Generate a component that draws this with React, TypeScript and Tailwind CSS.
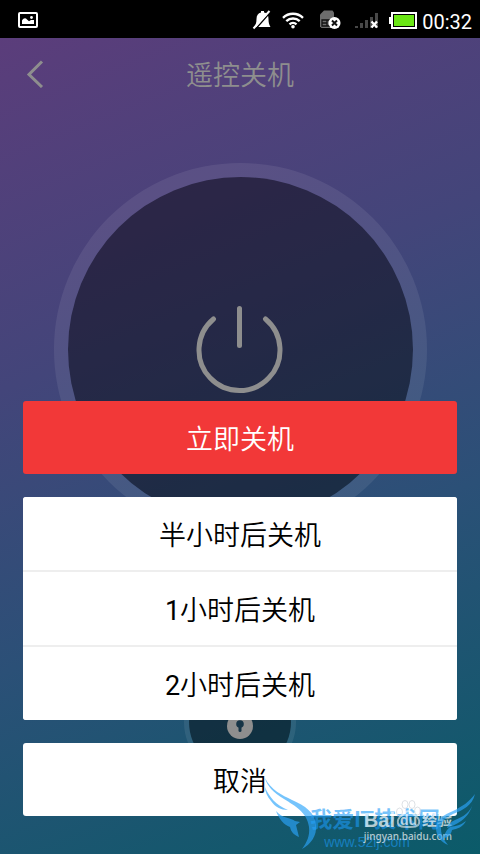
import React from "react";

const BellOff = () => (
  <svg width="20" height="20" viewBox="0 0 20 20" aria-hidden="true">
    <path d="M9 1h3v1.500c3.500.8 4.500 3 4.500 6.500 0 4 .6 5.500 2 8H2c1.800-2.500 2.500-4 2.500-8 0-3.500 1.500-5.700 4.500-6.500z" fill="#fff" />
    <path d="M19 1.500 4 18.500" stroke="#000" strokeWidth="1.500" />
    <path d="M17.500 1 1.500 18.500" stroke="#fff" strokeWidth="2" />
  </svg>
);

const Wifi = () => (
  <svg width="22" height="17" viewBox="0 0 22 17" fill="none" stroke="#fff" strokeWidth="2.400" aria-hidden="true">
    <path d="M1 5.800a14.500 14.500 0 0 1 20 0M4.300 9.200a9.800 9.800 0 0 1 13.400 0M7.500 12.300a5.300 5.300 0 0 1 7 0" />
    <circle cx="11" cy="14.800" r="1.800" fill="#fff" stroke="none" />
  </svg>
);

const Sim = () => (
  <svg width="22" height="20" viewBox="0 0 22 20" aria-hidden="true">
    <path d="M5 .5h8.500l1.500 2V18H2.500L1 16.500V4.500z" fill="#6c6c6c" />
    <path d="M3 10h5v6H3zM3 13h5M8 10h3M8 16h3" fill="none" stroke="#111" strokeWidth="1.300" />
    <circle cx="15.500" cy="13" r="6" fill="#fff" />
    <path d="m13 10.500 5 5m0-5-5 5" stroke="#111" strokeWidth="2" />
  </svg>
);

const Signal = () => (
  <svg width="24" height="17" viewBox="0 0 24 17" aria-hidden="true">
    <path d="M0 14h3v2H0zM5 11h3v5H5zM10 8h3v8h-3zM15 5h3v11h-3zM20 1h3v15h-3z" fill="#484848" />
    <path d="m16.500 9.500 5.500 6m0-6-5.500 6" stroke="#fff" strokeWidth="2.300" />
  </svg>
);

const Battery = () => (
  <svg width="28" height="17" viewBox="0 0 28 17" aria-hidden="true">
    <path d="M0 5h3v7H0z" fill="#fff" />
    <rect x="3" y="1" width="24" height="15" fill="#000" stroke="#fff" strokeWidth="2" />
    <rect x="5" y="3" width="20" height="11" fill="#6ae614" />
  </svg>
);

const StatusBar = () => (
  <div className="flex h-[38px] items-center bg-black pt-0.5 pr-2 pl-[18px] text-white">
    <svg width="20" height="16" viewBox="0 0 20 16" aria-hidden="true">
      <rect x="1" y="1" width="18" height="14" rx="1" fill="none" stroke="#fff" strokeWidth="2" />
      <path d="M4 12V8.500C5.500 6 7.500 5.500 9 7.500l2 1.800L13 8h3v4z" fill="#fff" />
      <circle cx="13.500" cy="5.500" r="1.400" fill="#fff" />
    </svg>
    <div className="ml-auto flex items-center">
      <BellOff />
      <span className="ml-[10px]"><Wifi /></span>
      <span className="ml-[15px]"><Sim /></span>
      <span className="ml-[14px]"><Signal /></span>
      <span className="ml-[10px]"><Battery /></span>
      <time className="ml-[5px] pt-1 font-[Roboto] text-xl leading-6">00:32</time>
    </div>
  </div>
);

const Watermarks = () => (
  <div className="pointer-events-none absolute right-0 bottom-0 h-[84px] w-[220px]">
    <div className="absolute right-10 bottom-1 flex flex-col items-center text-[#1b9af7]/60">
      <span className="text-[22px] leading-7 font-bold whitespace-nowrap">我爱IT技术网</span>
      <span className="mr-4 font-['Liberation_Sans'] text-sm leading-4">www.52ij.com</span>
    </div>
    <div className="absolute right-7 bottom-3 flex flex-col items-end text-white/70">
      <div className="flex items-end font-bold">
        <span className="font-['Liberation_Sans'] text-xl leading-5">Bai</span>
        <div className="relative h-8 w-[27px]">
          <svg width="27" height="32" viewBox="0 0 27 32" fill="none" stroke="#d5dade" strokeOpacity=".8" aria-hidden="true">
            <ellipse cx="4.500" cy="14" rx="3" ry="4" />
            <ellipse cx="10" cy="6.500" rx="3" ry="4" />
            <ellipse cx="17" cy="6.500" rx="3" ry="4" />
            <ellipse cx="22.500" cy="13" rx="3" ry="4" />
            <path d="M13.500 13c3 0 4 2.500 6.500 4.500 3 2 5 4.500 4 8-1 4-6 3.500-10.500 3.500S4 29.500 3 25.500c-1-3.500 1-6 4-8 2.500-2 3.500-4.500 6.500-4.500z" stroke="currentColor" strokeWidth="2" />
          </svg>
          <span className="absolute inset-x-0 bottom-0.5 text-center font-['Liberation_Sans'] text-sm leading-4">du</span>
        </div>
        <span className="text-[15px] leading-5">经验</span>
      </div>
      <span className="font-['Noto_Sans'] text-[10px] leading-3 font-medium">jingyan.baidu.com</span>
    </div>
    <svg className="absolute inset-0" width="220" height="84" viewBox="0 0 220 84" fill="#2ba4fa" fillOpacity=".65" aria-hidden="true">
      <path d="M5 8c6 12 17 17 27 22 13 6 23 12 24 25 1 11-5 19-14 24 5-7 8-13 7-22C47 42 35 36 24 29 13 22 7 16 5 8z" />
      <path d="M5 17c4 10 11 18 23 23-7 0-13-3-17-9-4-5-6-9-6-14z" />
      <path d="M16 41c7 8 14 6 19 10l5 1-4 3 3 12c-5-2-8-5-9-10-6-2-11-8-14-16z" />
      <path d="M215 24c-3 12-12 16-22 20-8 4-13 8-12 15 0 6 3 11 7 16-7-3-12-9-12-17 0-9 8-13 17-17 10-5 16-9 22-17z" />
      <path d="M213 33c-2 9-10 14-18 17-4 2-7 4-8 8 8-3 22-8 26-25z" />
      <path d="M206 51c-3 6-9 8-14 9-1 5-4 8-9 8 2-4 3-8 7-11 6-1 11-2 16-6z" />
    </svg>
  </div>
);

const delays = [
  { amount: "半", unit: "小时后关机" },
  { amount: "1", unit: "小时后关机" },
  { amount: "2", unit: "小时后关机" },
];

export default function App() {
  return (
    <div className="flex min-h-screen flex-col font-['Roboto','Noto_Sans_CJK_SC',sans-serif]">
      <StatusBar />
      <main className="relative flex flex-1 flex-col bg-[linear-gradient(158deg,#5b3d7b_0%,#43457a_35%,#2b5077_63%,#0b5b69_100%)]">
        <header className="grid h-[72px] grid-cols-[72px_1fr_72px] items-center text-[#8e8e8e]">
          <button aria-label="返回" className="flex h-full items-center pl-[26px]">
            <svg width="18" height="28" viewBox="0 0 18 28" fill="none" stroke="currentColor" strokeWidth="3" aria-hidden="true">
              <path d="M16 1.500 3 14.500 16 27" />
            </svg>
          </button>
          <h1 className="pt-1 text-center text-[27px] leading-8 font-[350]">遥控关机</h1>
        </header>

        <div className="flex flex-col items-center pt-[53px]">
          <button aria-label="关机" className="flex size-[373px] items-center justify-center rounded-full border-[14px] border-white/8 bg-black/42 bg-clip-padding text-[#8e8e8e]">
            <svg width="88" height="88" viewBox="0 0 88 88" fill="none" stroke="currentColor" strokeWidth="5" strokeLinecap="round" aria-hidden="true">
              <path d="M17.500 13a40.500 40.500 0 1 0 52 0M43.500 2.500v37" />
            </svg>
          </button>
          <button aria-label="锁定" className="mt-[130px] flex size-[112px] items-center justify-center rounded-full border-[5px] border-white/8 bg-black/42 bg-clip-padding">
            <svg className="mt-2" width="28" height="28" viewBox="0 0 28 28" aria-hidden="true">
              <circle cx="14" cy="14" r="13" fill="#8e8e8e" />
              <circle cx="14" cy="12" r="3.800" fill="#163446" />
              <path d="M14 13v5.500" stroke="#163446" strokeWidth="3" strokeLinecap="round" />
            </svg>
          </button>
        </div>

        <div role="dialog" aria-label="遥控关机" className="absolute inset-x-0 bottom-0 flex flex-col gap-[23px] px-[23px] pb-[38px] text-[27px] font-[350]">
          <button className="h-[73px] rounded-[3px] bg-[#f23838] pt-1.5 text-white">立即关机</button>
          <div className="flex flex-col gap-0.5 overflow-hidden rounded-[3px] bg-[#eee]">
            {delays.map(({ amount, unit }) => (
              <button key={amount} className="h-[73px] bg-white pt-1.5 text-black">
                {amount === "半" ? amount : <span className="font-normal">{amount}</span>}
                {unit}
              </button>
            ))}
          </div>
          <button className="h-[73px] rounded-[3px] bg-white pt-1.5 text-black">取消</button>
        </div>

        <Watermarks />
      </main>
    </div>
  );
}
